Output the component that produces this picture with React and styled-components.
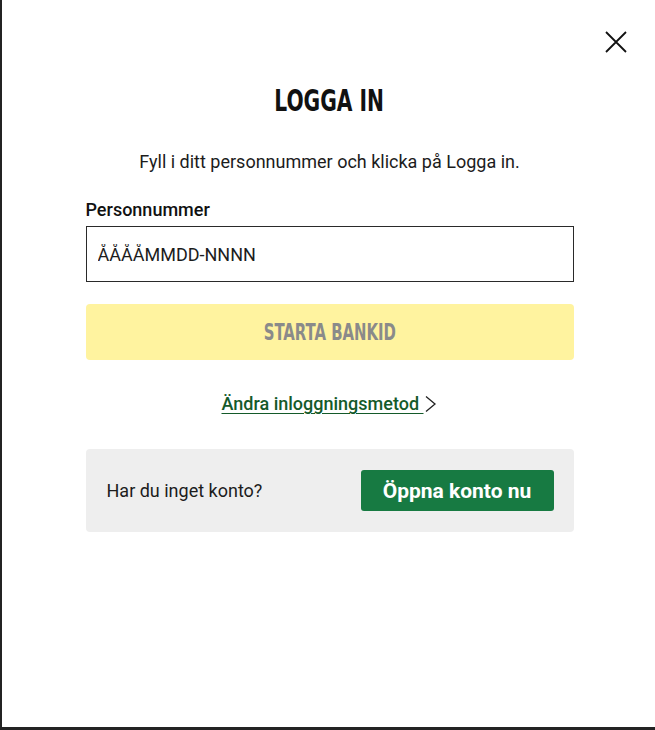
import styled, { createGlobalStyle } from "styled-components";

const GlobalStyle = createGlobalStyle`
  html, body {
    margin: 0;
    padding: 0;
    background: #222222;
  }
  body {
    font-family: Roboto, "Liberation Sans", sans-serif;
    color: #1c1c1c;
  }
`;

const Screen = styled.div`
  width: 655px;
  height: 730px;
  padding: 0 0 3px 2px;
  box-sizing: border-box;
  background: #232323;
`;

const Modal = styled.div`
  background: #ffffff;
  height: 100%;
  display: flex;
  flex-direction: column;
`;

const TopBar = styled.div`
  display: flex;
  justify-content: flex-end;
  padding: 30px 27px 0 0;
`;

const CloseButton = styled.button`
  border: none;
  background: none;
  padding: 0;
  width: 24px;
  height: 24px;
  cursor: pointer;
  display: flex;
  align-items: center;
  justify-content: center;
`;

const Content = styled.div`
  width: 488px;
  margin: 0 auto;
  padding-left: 2px;
  display: flex;
  flex-direction: column;
`;

const Title = styled.h1`
  margin: 30px 0 0;
  text-align: center;
  font-size: 30px;
  line-height: 34px;
  font-weight: 700;
  color: #111;
`;

// the display face is a tall condensed grotesk; squeeze the condensed sans to match
const Squeezed = styled.span`
  display: inline-block;
  font-family: "DejaVu Sans Condensed", "DejaVu Sans", sans-serif;
  font-weight: 700;
  transform: scaleX(${(p) => p.$scale});
  white-space: nowrap;
`;

const Intro = styled.p`
  margin: 32px 0 0;
  text-align: center;
  font-size: 18px;
  line-height: 24px;
  color: #1c1c1c;
`;

const Label = styled.label`
  margin-top: 24px;
  font-size: 18px;
  font-weight: 500;
  line-height: 24px;
  color: #111;
`;

const Input = styled.input`
  margin-top: 4px;
  height: 56px;
  box-sizing: border-box;
  border: 1px solid #2a2a2a;
  border-radius: 0;
  padding: 0 11px;
  font-family: Roboto, "Liberation Sans", sans-serif;
  font-size: 18px;
  color: #1c1c1c;
  outline: none;

  &::placeholder {
    color: #1c1c1c;
    opacity: 1;
  }
`;

const PrimaryButton = styled.button`
  margin-top: 22px;
  height: 56px;
  border: none;
  border-radius: 4px;
  background: #fff39f;
  color: #8a8a8a;
  font-size: 23px;
  cursor: default;
  display: flex;
  align-items: center;
  justify-content: center;
`;

const LinkRow = styled.div`
  margin-top: 32px;
  display: flex;
  justify-content: center;
  align-items: center;
`;

const MethodLink = styled.a`
  display: flex;
  align-items: center;
  color: #145a2a;
  font-size: 18px;
  font-weight: 500;
  line-height: 24px;
  cursor: pointer;
`;

const LinkText = styled.span`
  text-decoration: underline;
  text-underline-offset: 3px;
  white-space: pre;
`;

const SignupBox = styled.div`
  margin-top: 33px;
  height: 83px;
  box-sizing: border-box;
  background: #eeeeee;
  border-radius: 4px;
  padding: 0 20px 0 21px;
  display: flex;
  align-items: center;
  justify-content: space-between;
`;

const SignupText = styled.span`
  font-size: 18px;
  color: #1c1c1c;
`;

const SecondaryButton = styled.button`
  width: 193px;
  height: 41px;
  border: none;
  border-radius: 3px;
  background: #177a42;
  color: #ffffff;
  font-family: Roboto, "Liberation Sans", sans-serif;
  font-weight: 700;
  font-size: 21px;
  cursor: pointer;
`;

const CloseIcon = () => (
  <svg width="22" height="22" viewBox="0 0 22 22" fill="none">
    <path d="M1 1L21 21M21 1L1 21" stroke="#111" strokeWidth="1.8" />
  </svg>
);

const Chevron = () => (
  <svg width="14" height="18" viewBox="0 0 14 18" fill="none">
    <path d="M2 1.5L11 9L2 16.5" stroke="#222" strokeWidth="1.3" />
  </svg>
);

const App = () => {
  return (
    <>
      <GlobalStyle />
      <Screen>
        <Modal>
          <TopBar>
            <CloseButton aria-label="Stäng">
              <CloseIcon />
            </CloseButton>
          </TopBar>
          <Content>
            <Title>
              <Squeezed $scale={0.75}>LOGGA IN</Squeezed>
            </Title>
            <Intro>Fyll i ditt personnummer och klicka på Logga in.</Intro>
            <Label htmlFor="pnr">Personnummer</Label>
            <Input id="pnr" placeholder="ÅÅÅÅMMDD-NNNN" />
            <PrimaryButton>
              <Squeezed $scale={0.72}>STARTA BANKID</Squeezed>
            </PrimaryButton>
            <LinkRow>
              <MethodLink>
                <LinkText>Ändra inloggningsmetod </LinkText>
                <Chevron />
              </MethodLink>
            </LinkRow>
            <SignupBox>
              <SignupText>Har du inget konto?</SignupText>
              <SecondaryButton>Öppna konto nu</SecondaryButton>
            </SignupBox>
          </Content>
        </Modal>
      </Screen>
    </>
  );
};

export default App;
